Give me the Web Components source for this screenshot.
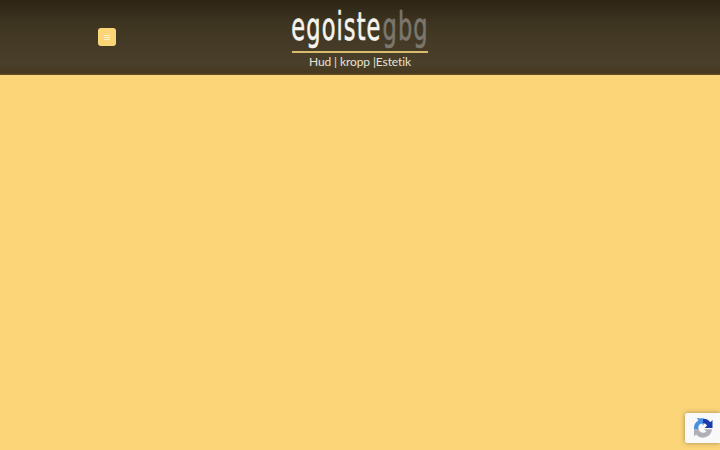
<!DOCTYPE html>
<html lang="sv">
<head>
<meta charset="utf-8">
<title>egoistegbg</title>
<style>
  html, body { margin: 0; height: 100%; background: #fbd578; overflow: hidden; }
</style>
</head>
<body>
<site-header></site-header>
<recaptcha-badge></recaptcha-badge>

<script>
class MenuButton extends HTMLElement {
  constructor() {
    super()
    this.attachShadow({ mode: 'open' }).innerHTML = `
      <style>
        :host { display: block; width: 18px; height: 18px; margin-top: -1px; }
        button {
          display: flex; flex-direction: column; align-items: center; justify-content: center; gap: 1px;
          width: 18px; height: 18px; padding: 0; border: 0; border-radius: 3px;
          background: #fbd578; cursor: pointer;
        }
        i { display: block; width: 6px; height: 1px; background: #fff1c8; }
      </style>
      <button type="button" aria-label="Meny"><i></i><i></i><i></i></button>`
  }
}

class SiteLogo extends HTMLElement {
  constructor() {
    super()
    this.attachShadow({ mode: 'open' }).innerHTML = `
      <style>
        :host { display: flex; flex-direction: column; align-items: center; width: 137px; }
        .mark {
          display: flex; justify-content: center; width: 137px; height: 43px;
          font: 400 25px/43px "DejaVu Sans Condensed", "DejaVu Sans", sans-serif; white-space: nowrap;
          letter-spacing: 1.1px;
        }
        .inner { display: flex; flex: none; transform: translateY(-1px) scaleY(1.55); }
        .ego { color: #f6f4ee; -webkit-text-stroke: .4px #f6f4ee; }
        .gbg { color: #7b776d; margin-left: 1px; -webkit-text-stroke: .4px #7b776d; }
        hr { width: 136px; height: 2px; margin: 2px 0 0; border: 0; background: #d9bd6c; }
        .tag {
          margin-top: 1px; color: #e6e2d6; white-space: pre;
          font: 400 12px/16px "Lato", sans-serif; letter-spacing: -.1px;
        }
      </style>
      <div class="mark"><div class="inner"><span class="ego">egoiste</span><span class="gbg">gbg</span></div></div>
      <hr>
      <div class="tag">Hud | kropp |Estetik</div>`
  }
}

class SiteHeader extends HTMLElement {
  constructor() {
    super()
    this.attachShadow({ mode: 'open' }).innerHTML = `
      <style>
        :host {
          display: grid; grid-template-columns: 1fr auto 1fr; align-items: center;
          height: 75px; box-sizing: border-box; padding-left: 98px;
          background: linear-gradient(#2d2515 0%, #3f3622 35%, #4a3f2a 85%, #46391f 97%, #6b5220 100%);
        }
        site-logo { margin-left: -98px; }
      </style>
      <menu-button></menu-button>
      <site-logo></site-logo>`
  }
}

class RecaptchaBadge extends HTMLElement {
  constructor() {
    super()
    this.attachShadow({ mode: 'open' }).innerHTML = `
      <style>
        :host {
          position: fixed; right: 0; bottom: 7px; display: flex; align-items: center; justify-content: center;
          width: 35px; height: 30px; box-sizing: border-box;
          background: #f9f9f9; box-shadow: 0 0 5px rgba(90,80,50,.55); border-radius: 2px 0 0 2px;
        }
        svg { display: block; width: 22px; height: 22px; }
      </style>
      <svg viewBox="0 0 22 22" aria-hidden="true">
        <path fill="#adb0b6" d="M2 12h4.400a4.800 4.800 0 0 0 8 3l-2.200-2.200H20a9.200 9.200 0 0 1-16 5.200L2 20z" transform="translate(0 -.5)"/>
        <path fill="#4a90e2" d="M2 12A9.200 9.200 0 0 1 6.500 3.200L4.500 1.200 11.500 1.200V8.500L9.600 6.600A4.800 4.800 0 0 0 6.400 12z"/>
        <path fill="#1c3aa9" d="M11 1.800a9.200 9.200 0 0 1 7.400 3.400L20.500 3v8h-7.800l2.400-2.500A4.800 4.800 0 0 0 11 6.300z"/>
      </svg>`
  }
}

customElements.define('menu-button', MenuButton)
customElements.define('site-logo', SiteLogo)
customElements.define('site-header', SiteHeader)
customElements.define('recaptcha-badge', RecaptchaBadge)
</script>
</body>
</html>
